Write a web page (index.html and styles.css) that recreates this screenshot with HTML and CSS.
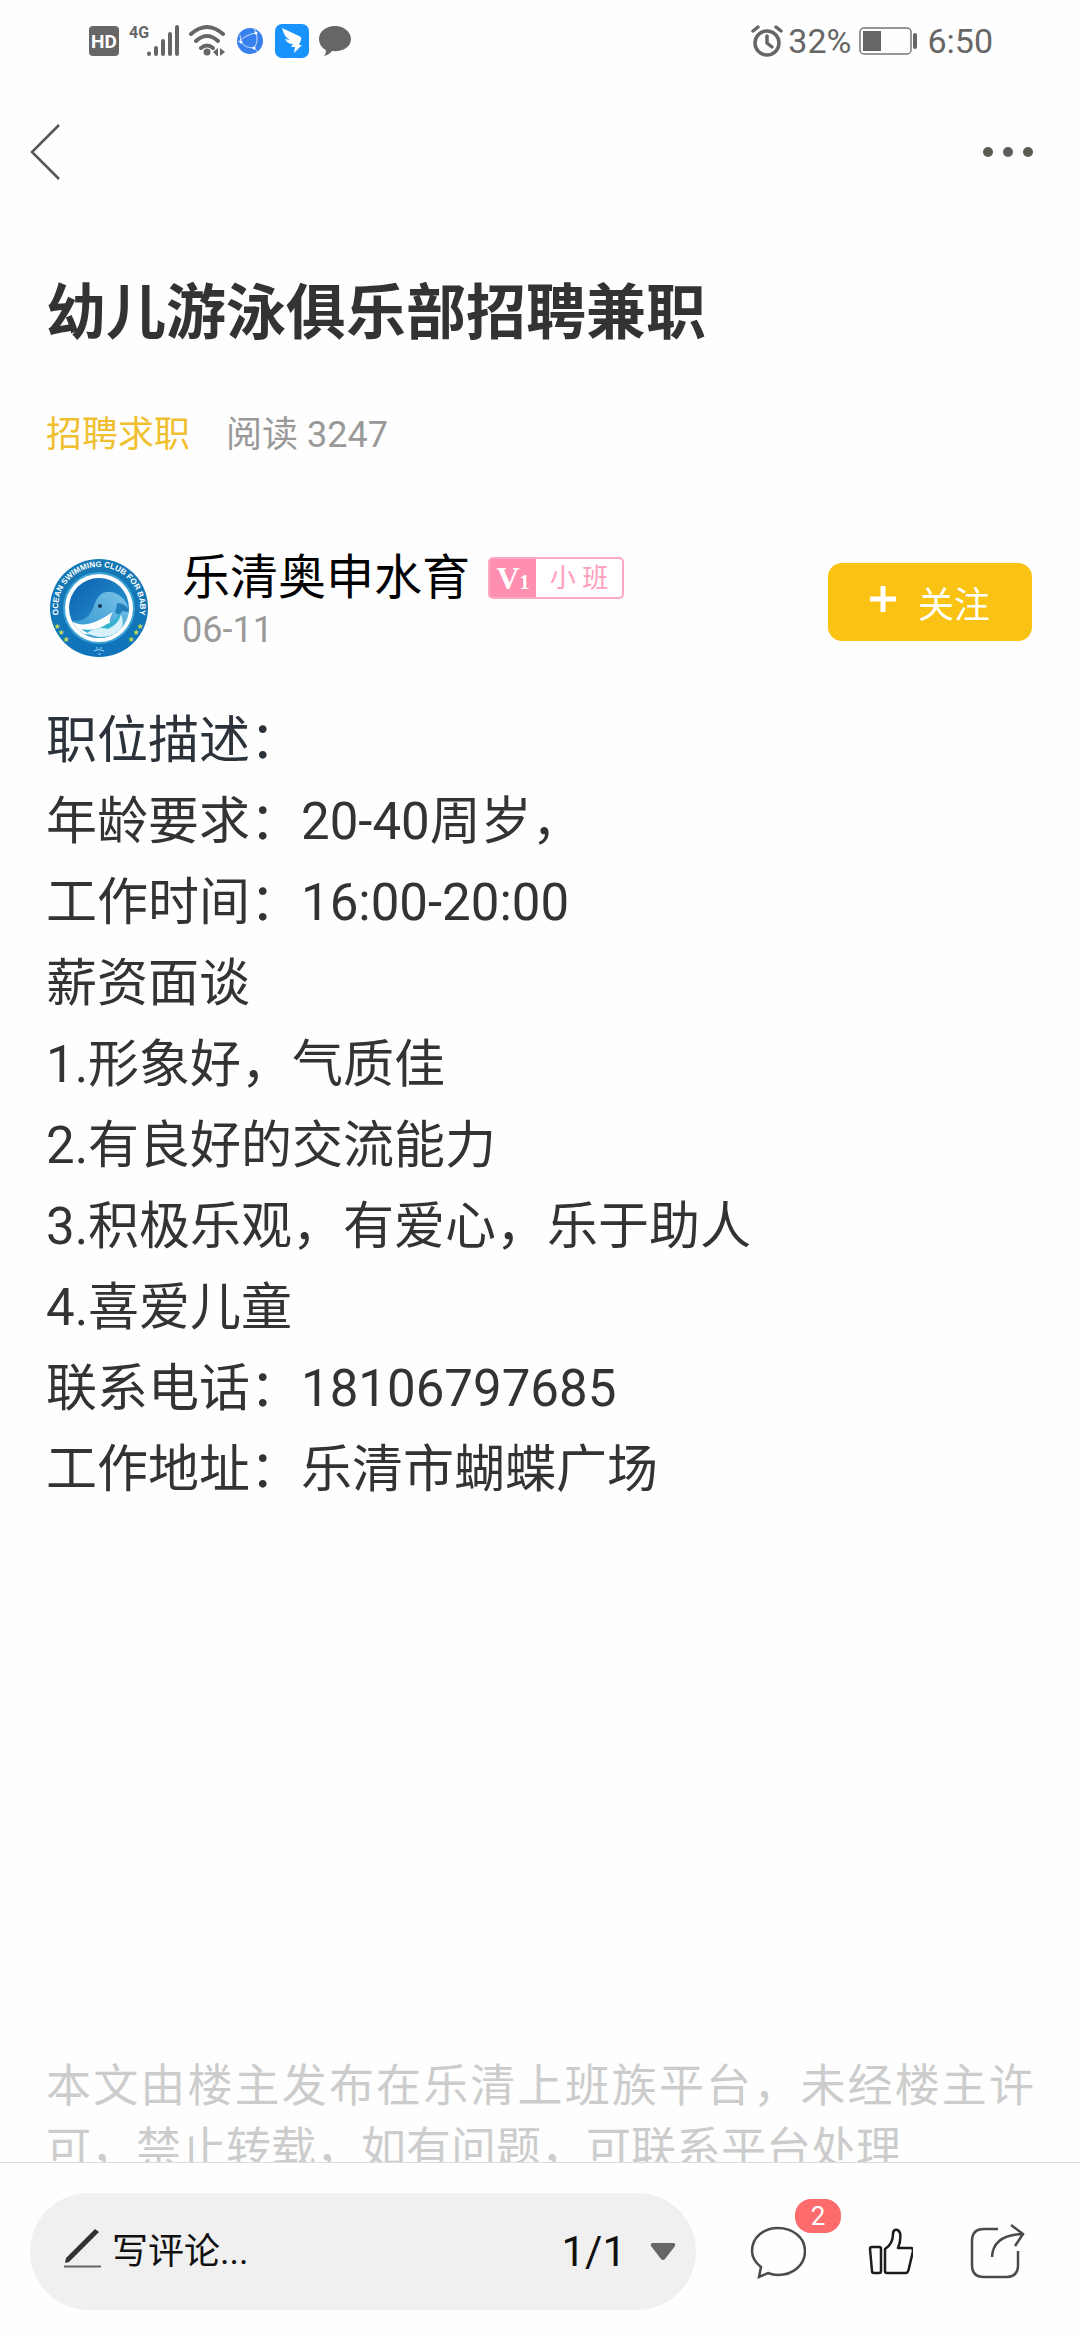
FILE: index.html
```html
<!DOCTYPE html>
<html lang="zh-CN">
<head>
    <meta charset="UTF-8">
    <meta name="viewport" content="width=device-width, initial-scale=1.0">
    <title>幼儿游泳俱乐部招聘兼职</title>

    <link rel="stylesheet" href="styles.css">
</head>
<body>

    <div class="status-bar">
        <div class="status-left">
            <svg class="status-icons" width="262" height="36" viewBox="0 0 262 36">
                <!-- HD -->
                <rect x="0" y="3" width="30" height="30" rx="4" fill="#666"/>
                <text x="15" y="25" class="hd-text">HD</text>
                <!-- 4G signal -->
                <text x="40" y="15" class="net-text">4G</text>
                <g stroke="#666" stroke-width="4" stroke-linecap="round">
                    <path d="M60 30.5v.5M67 25v6M74 18v13M81 11v20M88 4v27"/>
                </g>
                <!-- wifi -->
                <g fill="none" stroke="#666" stroke-width="4" stroke-linecap="round">
                    <path d="M102 11q16-14 32 0M107 18q11-10 22 0M112 25q6-5 12 0"/>
                </g>
                <circle cx="118" cy="29" r="3.5" fill="#666"/>
                <path d="M129 25v8h-1l-4-4zM131 25v8l5-4z" fill="#666"/>
                <!-- browser -->
                <circle cx="161" cy="18" r="13" fill="#3880ee"/>
                <g fill="none" stroke="#cfe0fb" stroke-width="1">
                    <path d="M149 19q9-8 18-9M152 19q4 6 13 6M167 10q3 8-2 15M167 10l-2-5M165 25l4 4M152 19l-1-7"/>
                </g>
                <circle cx="167" cy="10" r="1.5" fill="#fff"/>
                <circle cx="152" cy="19" r="1.5" fill="#fff"/>
                <circle cx="165" cy="25" r="1.5" fill="#fff"/>
                <!-- dingtalk -->
                <rect x="186" y="1" width="34" height="34" rx="7" fill="#1893fb"/>
                <path d="M193 5l17 8q3 1 2 4l-2 5h3l-8 8 1-6h-4l2-3q-6 0-8-5l5 1q-6-3-8-12z" fill="#fff"/>
                <!-- message -->
                <path d="M246 3c-9 0-16 5.500-16 13 0 5 3 9 7 11q0 4-2 6 5-1 8-5c11 1 19-4 19-12 0-7-7-13-16-13z" fill="#666"/>
            </svg>
        </div>
        <div class="status-right">
            <svg width="32" height="32" viewBox="0 0 32 32" fill="none" stroke="#666" stroke-width="3.500" stroke-linecap="round">
                <circle cx="16" cy="18" r="12"/>
                <path d="M16 11v7l5 4M2 6l5-4M30 6l-5-4"/>
            </svg>
            <span class="battery-num">32%</span>
            <svg class="battery" width="60" height="28" viewBox="0 0 60 28">
                <rect x="1" y="1" width="51" height="26" rx="4" fill="none" stroke="#777" stroke-width="1.500"/>
                <rect x="4" y="4" width="18" height="20" fill="#666"/>
                <rect x="54" y="6" width="4" height="16" rx="2" fill="#666"/>
            </svg>
            <span>6:50</span>
        </div>
    </div>

    <header class="nav">
        <button class="nav-button" aria-label="返回">
            <svg width="30" height="56" viewBox="0 0 30 56" fill="none" stroke="#555" stroke-width="2.500">
                <path d="M29 1L2 28l27 27"/>
            </svg>
        </button>
        <button class="nav-button" aria-label="更多">
            <svg width="52" height="12" viewBox="0 0 52 12" fill="#5c5d57">
                <circle cx="6" cy="6" r="5"/>
                <circle cx="26" cy="6" r="5"/>
                <circle cx="46" cy="6" r="5"/>
            </svg>
        </button>
    </header>

    <main class="post">
        <h1>幼儿游泳俱乐部招聘兼职</h1>

        <div class="post-meta">
            <a href="#" class="category">招聘求职</a>
            <span>阅读 3247</span>
        </div>

        <div class="author">
            <svg class="avatar" width="106" height="106" viewBox="-53 -53 106 106">
                <defs>
                    <linearGradient id="ring" x1="0" y1="0" x2="0" y2="1">
                        <stop offset="0" stop-color="#1679b4"/>
                        <stop offset="1" stop-color="#0f74bb"/>
                    </linearGradient>
                    <linearGradient id="sea" x1="0" y1="0" x2="1" y2="1">
                        <stop offset="0" stop-color="#0b5fae"/>
                        <stop offset="1" stop-color="#2fa0d6"/>
                    </linearGradient>
                    <linearGradient id="whale" x1="1" y1="0" x2="0" y2="1">
                        <stop offset="0" stop-color="#7cc4ea"/>
                        <stop offset="1" stop-color="#2590ca"/>
                    </linearGradient>
                    <clipPath id="inner"><circle r="30"/></clipPath>
                    <path id="arc" d="M-37.500 16.500A41 41 0 1 1 37.500 16.500"/>
                </defs>
                <circle r="49" fill="url(#ring)"/>
                <circle r="36" fill="#3fa3d4"/>
                <circle r="34" fill="#fff"/>
                <circle r="30" fill="url(#sea)"/>
                <g clip-path="url(#inner)">
                    <path d="M-31 11C-16 17-8 8-4-5 0-16 9-19 18-14 29-9 33 5 26 17L5 33-20 27z" fill="url(#whale)"/>
                    <path d="M-31 11q12 9 27 3Q5 10 14 4 7 16 15 21 8 18-3 25-20 31-31 11z" fill="#fff"/>
                    <path d="M-18 21Q-4 24 8 16q10-3 12-12 9 7-1 20Q4 37-18 21z" fill="#36b3cf"/>
                    <path d="M-12 25q10-7 21-4 11-5 13-15Q28 22 14 27 0 32-12 25z" fill="#d9f1fb"/>
                    <path d="M18-5q9 0 13 9l-8-1q-2 6-7 1 2-4 2-9z" fill="#227fba"/>
                </g>
                <circle cx="1" cy="-2" r="2" fill="#173a60"/>
                <text class="club-text" text-anchor="middle"><textPath href="#arc" startOffset="50%">OCEAN SWIMMING CLUB FOR BABY</textPath></text>
                <g class="stars">
                    <text x="-42" y="21">★</text>
                    <text x="-38" y="27">★</text>
                    <text x="-33" y="34">★</text>
                    <text x="41" y="21">★</text>
                    <text x="37" y="27">★</text>
                    <text x="32" y="34">★</text>
                </g>
                <path d="M-5 43q5-3 10 0M-3 40h2M1 40h2M-1 46h3" stroke="#9fd3ee" fill="none"/>
            </svg>
            <div class="author-info">
                <div class="author-name">
                    <span>乐清奥申水育</span>
                    <span class="level"><b class="level-num">V<small>1</small></b><span class="level-name">小 班</span></span>
                </div>
                <time class="date">06-11</time>
            </div>
            <button class="follow">
                <svg width="26" height="32" viewBox="0 0 26 32" stroke="#fff" stroke-width="5">
                    <path d="M13 0v26M0 13h26"/>
                </svg>
                <span>关注</span>
            </button>
        </div>

        <div class="post-body">
            <p class="lead">职位描述：</p>
            <p>年龄要求：20-40周岁，</p>
            <p>工作时间：16:00-20:00</p>
            <p>薪资面谈</p>
            <p>1.形象好，气质佳</p>
            <p>2.有良好的交流能力</p>
            <p>3.积极乐观，有爱心，乐于助人</p>
            <p>4.喜爱儿童</p>
            <p>联系电话：18106797685</p>
            <p>工作地址：乐清市蝴蝶广场</p>
        </div>

        <p class="notice">本文由楼主发布在乐清上班族平台，未经楼主许可，禁止转载，如有问题，可联系平台处理</p>
    </main>

    <footer class="toolbar">
        <div class="comment-box">
            <svg width="38" height="48" viewBox="0 0 38 48">
                <path d="M31 1l4 3L5 34l-4 1 1-5z" fill="#333"/>
                <path d="M0 38.500h37" stroke="#666" stroke-width="2"/>
            </svg>
            <input type="text" placeholder="写评论..." aria-label="写评论">
            <button class="pager">
                1/1
                <svg width="26" height="18" viewBox="0 0 26 18">
                    <path d="M2 0h22q2 1 1 3L15 16q-2 2-4 0L1 3Q0 1 2 0z" fill="#666"/>
                </svg>
            </button>
        </div>
        <div class="actions">
            <button class="action" aria-label="评论">
                <svg width="56" height="56" viewBox="0 0 56 56" fill="none" stroke="#4a4a4a" stroke-width="2.500">
                    <path d="M9 53L11 43C6 39 2 34 2 27 2 13 14 4 28 4s27 9 27 23-12 24-27 24q-5 0-10-2z"/>
                </svg>
                <span class="count">2</span>
            </button>
            <button class="action" aria-label="点赞">
                <svg width="50" height="56" viewBox="-6 0 50 56" fill="none" stroke="#1c1c1c" stroke-width="2.500" stroke-linejoin="round">
                    <path d="M3 23h7q2 0 2 2v22q0 2-2 2H5q-2 0-2-2L1 25q0-2 2-2z"/>
                    <path d="M16 25c5-3 8-8 8-15 0-5 5-6 7-1 1 5 0 10-2 15h13q2 0 2 3l-4 17q-1 5-3 5H18q-2 0-2-2z"/>
                </svg>
            </button>
            <button class="action" aria-label="分享">
                <svg width="56" height="56" viewBox="0 0 56 56" fill="none" stroke="#4a4a4a" stroke-width="2.500">
                    <path d="M28 5H14Q2 5 2 17v24q0 12 12 12h22q12 0 12-12V27"/>
                    <path d="M22 33Q23 11 53 10M41 1l12 9-8 12"/>
                </svg>
            </button>
        </div>
    </footer>

</body>
</html>
```

FILE: styles.css
```css
* {
    box-sizing: border-box;
}

body {
    margin: 0;
    height: 100vh;
    display: flex;
    flex-direction: column;
    background-color: #fefefe;
    color: #333;
    font-family: Roboto, "Noto Sans CJK SC", sans-serif;
}

button,
input {
    margin: 0;
    padding: 0;
    border: none;
    background: none;
    font-family: inherit;
    color: inherit;
}

button {
    cursor: pointer;
}

svg {
    display: block;
    flex-shrink: 0;
}

/* --- Status Bar --- */
.status-bar {
    display: flex;
    justify-content: space-between;
    align-items: center;
    height: 82px;
    padding: 0 87px 0 89px;
    color: #666;
    font-size: 34px;
}

.status-right {
    display: flex;
    align-items: center;
}

.battery-num {
    margin: 0 8px 0 5px;
}

.battery {
    margin-right: 8px;
}

.hd-text {
    font-family: Roboto, sans-serif;
    font-size: 19px;
    font-weight: bold;
    fill: #fff;
    text-anchor: middle;
}

.net-text {
    font-family: Roboto, sans-serif;
    font-size: 16px;
    font-weight: bold;
    fill: #666;
}

/* --- Nav --- */
.nav {
    display: flex;
    justify-content: space-between;
    align-items: center;
    height: 140px;
    padding: 0 46px 0 30px;
}

/* --- Post --- */
.post {
    flex: 1;
    min-height: 0;
    overflow: hidden;
    padding: 50px 46px 0;
}

h1 {
    margin: 0 0 52px;
    font-size: 60px;
    line-height: 84px;
}

.post-meta {
    display: flex;
    gap: 36px;
    font-size: 36px;
    line-height: 54px;
    color: #999;
}

.category {
    color: #f0c030;
    text-decoration: none;
}

.author {
    display: flex;
    align-items: center;
    margin: 81px 0 39px;
}

.avatar {
    margin: 12px 30px 0 0;
}

.author-info {
    flex: 1;
}

.author-name {
    display: flex;
    align-items: center;
    gap: 18px;
    font-size: 48px;
    line-height: 56px;
    color: #000;
}

.date {
    display: block;
    font-size: 36px;
    line-height: 48px;
    color: #999;
}

.level {
    display: flex;
    height: 42px;
    border: 2px solid #ffa9c0;
    border-radius: 5px;
    background-color: #ff8fb0;
    overflow: hidden;
    line-height: 38px;
}

.level-num {
    width: 46px;
    text-align: center;
    font-family: "Liberation Serif", serif;
    font-size: 32px;
    color: #fff;
}

.level-num small {
    font-size: 20px;
}

.level-name {
    width: 86px;
    background-color: #fff;
    text-align: center;
    font-size: 26px;
    color: #ff9dba;
}

.follow {
    display: flex;
    justify-content: center;
    align-items: center;
    gap: 22px;
    width: 204px;
    height: 78px;
    margin-right: 2px;
    border-radius: 14px;
    background-color: #fac213;
    color: #fff;
    font-size: 36px;
}

.post-body {
    margin-bottom: 545px;
    font-size: 51px;
    line-height: 81px;
}

.post-body p {
    margin: 0;
}

.lead {
    color: #2b323a;
}

.notice {
    margin: 0;
    font-size: 45px;
    line-height: 63px;
    text-align: justify;
    color: #ccc;
}

/* Avatar badge */
.club-text {
    font-family: "Liberation Sans", sans-serif;
    font-size: 8px;
    font-weight: bold;
    fill: #fff;
}

.stars {
    font-family: "DejaVu Sans", sans-serif;
    font-size: 8px;
    fill: #c5dc56;
    text-anchor: middle;
}

/* --- Bottom Toolbar --- */
.toolbar {
    display: flex;
    align-items: center;
    padding: 30px 54px 30px 30px;
    border-top: 1px solid #ddd;
    background-color: #fefefe;
}

.comment-box {
    flex: 1;
    min-width: 0;
    display: flex;
    align-items: center;
    height: 117px;
    padding: 0 20px 0 34px;
    border-radius: 60px;
    background-color: #f0f0f0;
}

.comment-box input {
    flex: 1;
    min-width: 0;
    margin-left: 10px;
    font-size: 36px;
    outline: none;
}

.comment-box input::placeholder {
    color: #111;
    opacity: 1;
}

.pager {
    display: flex;
    align-items: center;
    gap: 24px;
    font-size: 42px;
    color: #111;
}

.actions {
    display: flex;
    align-items: center;
    gap: 57px;
    margin-left: 54px;
}

.action {
    position: relative;
}

.count {
    position: absolute;
    top: -25px;
    left: 45px;
    width: 46px;
    height: 34px;
    border-radius: 16px;
    background-color: #fd6b6d;
    color: #fff;
    font-size: 26px;
    line-height: 34px;
    text-align: center;
}
```
